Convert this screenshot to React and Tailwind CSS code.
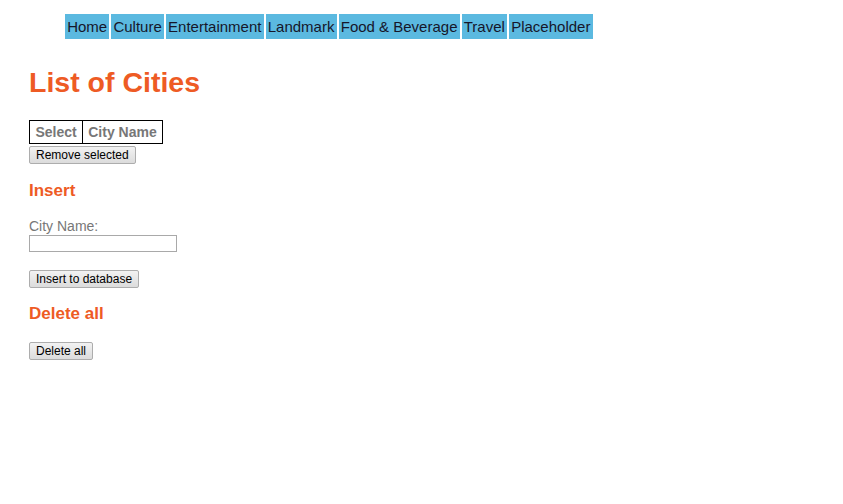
import React from "react";

const navItems = ["Home", "Culture", "Entertainment", "Landmark", "Food & Beverage", "Travel", "Placeholder"];

const btn =
  "block border border-[#adadad] bg-[linear-gradient(#f2f2f2,#dcdcdc)] rounded-[2px] px-[6px] py-px text-[12px] leading-[14px] text-black";

export default function App() {
  return (
    <div className="min-h-[504px] bg-white pt-[14px] font-['Liberation_Sans',Arial,sans-serif]">
      <nav className="ml-[65px] flex gap-[2px]">
        {navItems.map((n) => (
          <div key={n} className="bg-[#5bb9e0] px-[2.15px] h-[25px] leading-[25px] text-[15px] text-[#16162a]">
            {n}
          </div>
        ))}
      </nav>
      <div className="pl-[29px]">
        <h1 className="mt-[27px] text-[28.5px] font-bold text-[#ee5b24] leading-[32px]">List of Cities</h1>
        <table className="mt-[22px] border-collapse border border-black">
          <thead>
            <tr>
              <th className="border border-black px-[5.5px] py-[3px] text-[14px] leading-[16px] font-bold text-[#777]">Select</th>
              <th className="border border-black px-[5px] py-[3px] text-[14px] leading-[16px] font-bold text-[#777]">City Name</th>
            </tr>
          </thead>
        </table>
        <button className={"mt-[2px] " + btn}>Remove selected</button>
        <h3 className="mt-[17px] text-[17px] leading-[20px] font-bold text-[#ee5b24]">Insert</h3>
        <div className="mt-[17px] text-[14px] leading-[16px] text-[#777]">City Name:</div>
        <input type="text" className="mt-[1px] block w-[148px] h-[17px] border border-[#a9a9a9] bg-white outline-none" />
        <button className={"mt-[18px] " + btn}>Insert to database</button>
        <h3 className="mt-[16px] text-[17px] leading-[20px] font-bold text-[#ee5b24]">Delete all</h3>
        <button className={"mt-[18px] " + btn}>Delete all</button>
      </div>
    </div>
  );
}
